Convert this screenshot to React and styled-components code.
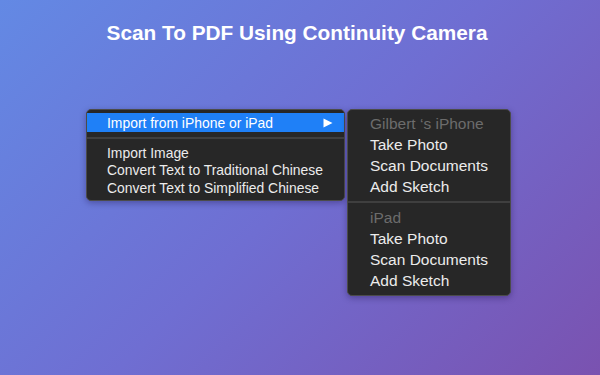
import React from "react";
import styled, { createGlobalStyle } from "styled-components";

const Global = createGlobalStyle`
  html, body { margin: 0; padding: 0; }
  body { font-family: "Liberation Sans", Arial, sans-serif; }
`;

const Page = styled.div`
  width: 600px;
  height: 375px;
  overflow: hidden;
  background: linear-gradient(135deg, #6389e4 0%, #6f6ed2 50%, #7a52b0 100%);
  display: flex;
  flex-direction: column;
  align-items: center;
  box-sizing: border-box;
  padding-top: 21px;
`;

const Title = styled.h1`
  margin: 0;
  font-family: "Liberation Sans", Arial, sans-serif;
  font-weight: 700;
  font-size: 20.8px;
  line-height: 24px;
  color: #ffffff;
  transform: translateX(-3px);
`;

const MenuArea = styled.div`
  align-self: stretch;
  display: flex;
  align-items: flex-start;
  gap: 2px;
  padding-left: 86px;
  margin-top: 64px;
`;

const Menu = styled.div`
  width: ${(p) => p.$width}px;
  box-sizing: border-box;
  background: #272727;
  border: 1px solid #4b4b4b;
  border-radius: 5px;
  padding: ${(p) => p.$pad};
  box-shadow: 0 2px 6px rgba(20, 10, 60, 0.35);
  color: #ececec;
  font-family: "Liberation Sans", Arial, sans-serif;
`;

const Item = styled.div`
  display: flex;
  align-items: center;
  justify-content: space-between;
  height: ${(p) => p.$h}px;
  padding: 0 11px 0 ${(p) => p.$indent}px;
  font-size: ${(p) => p.$size}px;
  white-space: nowrap;
  background: ${(p) => (p.$active ? "#1f80f7" : "transparent")};
  color: ${(p) => (p.$active ? "#ffffff" : p.$disabled ? "#6c6c6c" : "#ececec")};
`;

const Separator = styled.div`
  height: 2px;
  background: #3f3f3f;
  margin: ${(p) => p.$m};
`;

const Arrow = () => (
  <svg width="10" height="10" viewBox="0 0 10 10">
    <polygon points="0.5,0.5 9.5,5 0.5,9.5" fill="#ffffff" />
  </svg>
);

export default function App() {
  const left = [
    "Import Image",
    "Convert Text to Traditional Chinese",
    "Convert Text to Simplified Chinese",
  ];
  const groups = [
    { name: "Gilbert \u2018s iPhone", items: ["Take Photo", "Scan Documents", "Add Sketch"] },
    { name: "iPad", items: ["Take Photo", "Scan Documents", "Add Sketch"] },
  ];
  return (
    <Page>
      <Global />
      <Title>Scan To PDF Using Continuity Camera</Title>
      <MenuArea>
        <Menu $width={259} $pad="3px 0 3.5px">
          <Item $h={19} $indent={20} $size={13.9} $active>
            <span>Import from iPhone or iPad</span>
            <Arrow />
          </Item>
          <Separator $m="5px 0 5px" />
          {left.map((t) => (
            <Item key={t} $h={17.5} $indent={20} $size={13.9}>
              <span>{t}</span>
            </Item>
          ))}
        </Menu>
        <Menu $width={164} $pad="3px 0 4px">
          {groups.map((g, gi) => (
            <React.Fragment key={g.name}>
              {gi > 0 && <Separator $m="4px 0 4px" />}
              <Item $h={21} $indent={22} $size={15.5} $disabled>
                <span>{g.name}</span>
              </Item>
              {g.items.map((t) => (
                <Item key={t} $h={21} $indent={22} $size={15.5}>
                  <span>{t}</span>
                </Item>
              ))}
            </React.Fragment>
          ))}
        </Menu>
      </MenuArea>
    </Page>
  );
}
